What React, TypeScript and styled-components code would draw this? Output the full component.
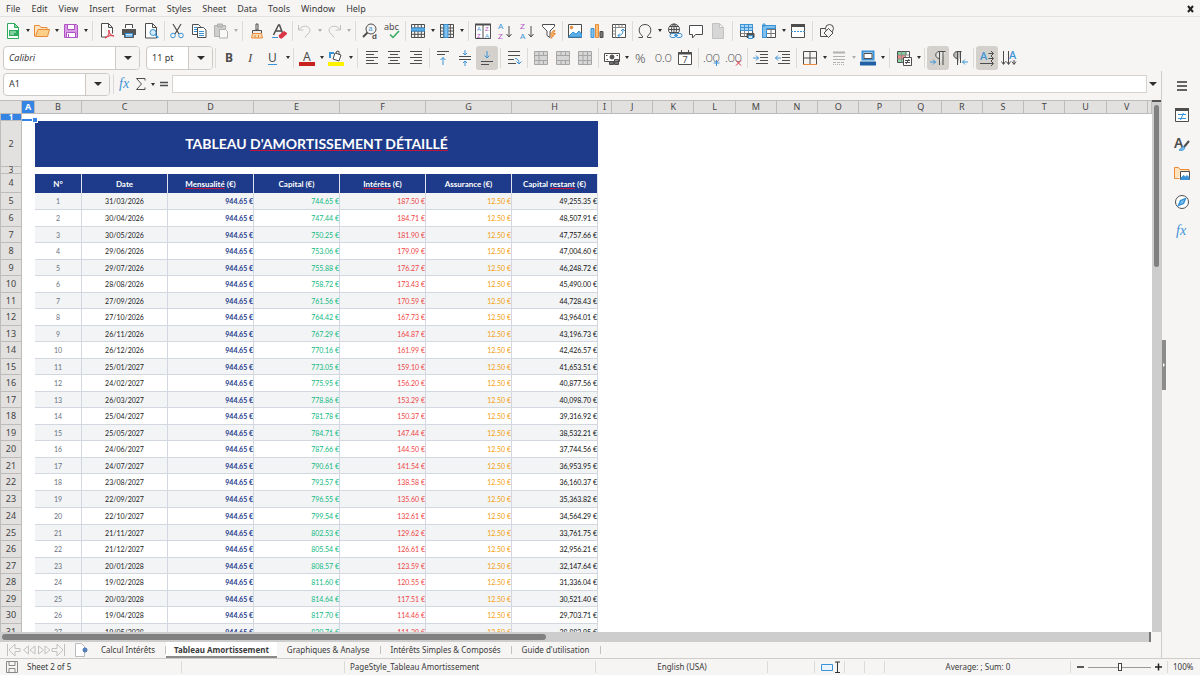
import React from "react";
import styled, { createGlobalStyle, css } from "styled-components";

const c = {
  chrome: "#f6f5f4",
  line: "#d5d3d0",
  text: "#3a3a3a",
  ink: "#4d4d4d",
  blue: "#3584e4",
  sky: "#3a93d6",
  navy: "#1e3a8a",
  header: "#e2e1e0",
  headerLine: "#bdbcbb",
  orange: "#e98b39",
  red: "#dc3545",
  purple: "#b152c4",
  green: "#2eab5c",
};

const Global = createGlobalStyle`
  * { box-sizing: border-box; }
  body { margin: 0; background: ${c.chrome}; color: ${c.text}; font-family: "Noto Sans", sans-serif; font-size: 9px; line-height: 12px; }
  button, input { font: inherit; color: inherit; margin: 0; padding: 0; border: 0; background: none; }
`;

const Shell = styled.div`
  display: flex;
  flex-direction: column;
  height: 100vh;
  min-height: 400px;
  overflow: hidden;
`;

/* ---------- menu ---------- */
const MenuBar = styled.nav`
  display: flex;
  align-items: center;
  height: 17px;
  flex: none;
  padding: 1px 5px 0 1px;
  border-bottom: 1px solid #e4e2e0;
`;
const MenuItem = styled.button`
  padding: 0 5px;
  margin-right: 1px;
  height: 15px;
`;
const CloseButton = styled.button`
  margin-left: auto;
  width: 10px;
  height: 15px;
  display: flex;
  align-items: center;
`;

/* ---------- toolbars ---------- */
const Toolbar = styled.div<{ $start?: number }>`
  display: flex;
  align-items: center;
  flex: none;
  height: 27px;
  padding-left: ${(p) => p.$start ?? 3}px;
`;
const Separator = styled.span<{ $w?: number }>`
  flex: none;
  width: ${(p) => p.$w ?? 5}px;
  height: 20px;
  background: linear-gradient(#dddbd8, #dddbd8) center / 1px 100% no-repeat;
`;
const ToolButton = styled.button<{ $active?: boolean; $dim?: boolean }>`
  flex: none;
  display: flex;
  align-items: center;
  justify-content: center;
  width: 22px;
  height: 24px;
  border-radius: 3px;
  ${(p) => p.$active && css`background: #d4d1cd;`}
  ${(p) => p.$dim && css`opacity: 0.4;`}
`;
const ArrowButton = styled.button<{ $dim?: boolean; $w?: number }>`
  flex: none;
  display: flex;
  align-items: center;
  justify-content: center;
  width: ${(p) => p.$w ?? 7}px;
  height: 24px;
  opacity: ${(p) => (p.$dim ? 0.35 : 1)};
`;
const Triangle = styled.span<{ $big?: boolean }>`
  border: ${(p) => (p.$big ? 4 : 2)}px solid transparent;
  border-top-color: #2e2e2e;
  border-bottom: 0;
  ${(p) => !p.$big && css`border-top-width: 3px;`}
`;
const Combo = styled.div<{ $w: number; $h?: number }>`
  display: flex;
  flex: none;
  width: ${(p) => p.$w}px;
  height: ${(p) => p.$h ?? 24}px;
  background: #fff;
  border: 1px solid #cdc9c5;
  border-radius: 4px;
  overflow: hidden;
  & + & { margin-left: 6px; }
`;
const ComboInput = styled.input<{ $italic?: boolean }>`
  flex: 1;
  min-width: 0;
  padding: 0 5px;
  font-style: ${(p) => (p.$italic ? "italic" : "normal")};
`;
const ComboButton = styled.button`
  width: 24px;
  display: flex;
  align-items: center;
  justify-content: center;
  background: ${c.chrome};
  border-left: 1px solid #cdc9c5;
`;

/* ---------- work area ---------- */
const Work = styled.div`
  display: flex;
  flex: 1;
  min-height: 0;
`;
const Main = styled.main`
  display: flex;
  flex-direction: column;
  flex: 1;
  min-width: 0;
`;
const FormulaBar = styled.div`
  display: flex;
  align-items: center;
  flex: none;
  height: 29px;
  padding: 1px 2px 4px 3px;
`;
const SmallTool = styled.button`
  flex: none;
  width: 16px;
  height: 20px;
  display: flex;
  align-items: center;
  justify-content: center;
`;
const FormulaInput = styled.input`
  flex: 1;
  min-width: 0;
  height: 18px;
  background: #fff;
  border: 1px solid #d5d3d0;
`;
const SheetRow = styled.div`
  display: flex;
  flex: 1;
  min-height: 0;
`;
const SheetView = styled.div`
  flex: 1;
  min-width: 0;
  overflow: hidden;
  background: #fff;
`;
const VTrack = styled.div`
  width: 9px;
  flex: none;
  background: #cdcdcd;
  border-top: 2px solid #555;
  padding: 3px 2px;
`;
const VThumb = styled.div`
  height: 31%;
  border-radius: 3px;
  background: #808080;
`;
const HTrack = styled.div`
  height: 10px;
  flex: none;
  margin-right: 10px;
  padding: 2px;
  background: #cdcdcd;
  border-right: 2px solid #777;
`;
const HThumb = styled.div`
  width: 47.5%;
  height: 6px;
  border-radius: 3px;
  background: #808080;
`;

/* ---------- grid ---------- */
const Grid = styled.table`
  width: 100%;
  table-layout: fixed;
  border-collapse: separate;
  border-spacing: 0;
  th, td { padding: 0; white-space: nowrap; }
`;
const Col = styled.col<{ $w?: number }>`
  width: ${(p) => (p.$w ? p.$w + "px" : "auto")};
`;
const HeadCell = styled.th<{ $on?: boolean }>`
  height: 14px;
  line-height: 12px;
  font-weight: ${(p) => (p.$on ? 700 : 400)};
  color: ${(p) => (p.$on ? "#fff" : "#444")};
  background: ${(p) => (p.$on ? c.blue : c.header)};
  border: solid ${c.headerLine};
  border-width: 1px 1px 1px 0;
`;
const RowHead = styled.th<{ $on?: boolean; $slim?: boolean }>`
  font-size: ${(p) => (p.$slim ? 8 : 9)}px;
  font-weight: ${(p) => (p.$on ? 700 : 400)};
  color: ${(p) => (p.$on ? "#fff" : "#444")};
  background: ${(p) => (p.$on ? c.blue : c.header)};
  border: solid ${c.headerLine};
  border-width: 0 1px 1px 1px;
`;
const FixedRow = styled.tr<{ $h: number }>`
  height: ${(p) => p.$h}px;
  line-height: ${(p) => Math.min(p.$h - 1, 12)}px;
`;
const Cursor = styled.td`
  position: relative;
  border-bottom: 2px solid ${c.blue};
  &::after {
    content: "";
    position: absolute;
    right: -2px;
    bottom: -3px;
    width: 4px;
    height: 4px;
    background: ${c.blue};
    outline: 1px solid #fff;
  }
`;
const Title = styled.th`
  background: ${c.navy};
  color: #fff;
  font: 700 14px/20px Lato, sans-serif;
`;
const Typo = styled.span`
  text-decoration: underline 1px #c0143c;
  text-decoration-skip-ink: none;
  text-underline-offset: 1px;
`;
const FieldHead = styled.th`
  background: ${c.navy};
  color: #fff;
  font: 700 8px/12px Lato, sans-serif;
  border-right: 1px solid #dfe3ee;
`;
/* Row height falls between two whole pixels, so rows alternate 16 and 17. */
const Body = styled.tbody`
  tr { height: 16px; line-height: 12px; }
  tr:nth-child(2n), tr:nth-child(9n + 1) { height: 17px; }
  tr:nth-child(odd) td { background: #f2f4f6; }
  tr td:nth-child(2), tr td:last-child { background: #fff; }
`;
const tones = {
  index: css`color: #6b7280; text-align: center;`,
  date: css`color: #222; text-align: center;`,
  pay: css`color: ${c.navy}; text-align: right; font-weight: 700;`,
  capital: css`color: #10b981; text-align: right;`,
  interest: css`color: #ef4444; text-align: right;`,
  insurance: css`color: #f59e0b; text-align: right;`,
  rest: css`color: #111; text-align: right;`,
};
const Cell = styled.td<{ $tone: keyof typeof tones }>`
  font-family: Lato, sans-serif;
  font-size: 7px;
  border: solid #d3d7df;
  border-width: 0 1px 1px 0;
  ${(p) => tones[p.$tone]}
`;

/* ---------- sheet tabs ---------- */
const Tabs = styled.div`
  display: flex;
  align-items: stretch;
  flex: none;
  height: 16px;
  font-size: 8px;
`;
const TabTools = styled.div`
  display: flex;
  align-items: center;
  width: 91px;
  padding-left: 6px;
`;
const NavButton = styled.button`
  width: 15px;
  height: 16px;
  opacity: 0.3;
`;
const AddButton = styled.button`
  margin-left: 8px;
  width: 16px;
  height: 16px;
`;
const Tab = styled.button<{ $on?: boolean }>`
  padding: 0 ${(p) => (p.$on ? 8 : 11)}px 1px ${(p) => (p.$on ? 8 : 10)}px;
  font-weight: ${(p) => (p.$on ? 700 : 400)};
  ${(p) =>
    p.$on
      ? css`background: #fff; border-bottom: 2px solid #8a8a8a; padding-top: 1px; padding-bottom: 0;`
      : css`background: linear-gradient(#c4c2c0, #c4c2c0) right center / 1px 8px no-repeat;`}
`;

/* ---------- side bar ---------- */
const Side = styled.aside`
  display: flex;
  flex: none;
  width: 39px;
  border-left: 1px solid #cfcdca;
`;
const Grip = styled.button`
  align-self: center;
  width: 4px;
  height: 50px;
  background: #8c8c8c;
  display: flex;
  align-items: center;
  justify-content: center;
  &::after {
    content: "";
    border: 2px solid transparent;
    border-left-color: #fff;
    border-right: 0;
  }
`;
const SideDeck = styled.div`
  flex: 1;
  display: flex;
  flex-direction: column;
  align-items: center;
  padding-right: 2px;
`;
const SideButton = styled.button`
  width: 29px;
  height: 29px;
  display: flex;
  align-items: center;
  justify-content: center;
`;

/* ---------- status bar ---------- */
const Status = styled.footer`
  display: grid;
  grid-template-columns: 22px 160fr 163fr 251fr 172fr 47px 30px 20px 20px 186fr 97px 32px;
  flex: none;
  height: 17px;
  border-top: 1px solid #cfcdca;
  font-size: 8px;
`;
const StatusCell = styled.div<{ $center?: boolean; $plain?: boolean }>`
  display: flex;
  align-items: center;
  justify-content: ${(p) => (p.$center ? "center" : "flex-start")};
  padding: 0 5px;
  white-space: nowrap;
  ${(p) => !p.$plain && css`background: linear-gradient(#dddbd8, #dddbd8) right center / 1px 12px no-repeat;`}
`;
const ZoomButton = styled.button`
  width: 9px;
  height: 16px;
  flex: none;
`;
const Slider = styled.input`
  appearance: none;
  flex: 1;
  min-width: 0;
  height: 12px;
  margin: 0 3px;
  background: linear-gradient(#999, #999) center / 100% 1px no-repeat;
  &::-webkit-slider-thumb {
    appearance: none;
    width: 4px;
    height: 8px;
    background: #fff;
    border: 1px solid #444;
  }
`;

/* ---------- icons ---------- */
const Glyph = styled.svg`
  display: block;
  flex: none;
  width: 16px;
  height: 16px;
  fill: none;
  stroke: ${c.ink};
  stroke-width: 1;
  overflow: visible;
  text { stroke: none; fill: ${c.ink}; font-family: "Noto Sans", sans-serif; }
  .small text, text.small { font-family: "Liberation Sans", sans-serif; }
`;
const Ic = ({ children }: { children: React.ReactNode }) => (
  <Glyph viewBox="0 0 16 16" aria-hidden="true">{children}</Glyph>
);
const page = "M2.5.5h7l4 4v11h-11zM9.5.5v4h4";
const B = c.sky;
const gridPath = "M1.5 1.5h13v13h-13zM1.5 5h13M1.5 8h13M1.5 11.3h13M4.7 1.5v13M8 1.5v13M11.3 1.5v13";
const merge = (mid: React.ReactNode) => (
  <g stroke="#a5a5a5">
    <path d="M1.5 1.5h13v13h-13z" fill="#d6d6d6" />
    <path d="M1.5 5.5h13M1.5 10.5h13M6 1.5v4M10.5 1.5v4M6 10.5v4M10.5 10.5v4" />
    {mid}
  </g>
);

const icons: Record<string, React.ReactNode> = {
  new: <><path d="M2.5.5h7l4 4v11h-11z" stroke={c.green} fill="#fff" /><path d="M9.5.5v4h4z" stroke={c.green} fill="#8fd6a4" /><path d="M4 7h9v6H4z" fill={c.green} stroke="none" /><path d="M5 9h6M5 11h4" stroke="#d9f2e1" /></>,
  open: <><path d="M.5 13.5v-11h5l1.500 2h6v3" stroke={c.orange} fill="#fbe3bd" /><path d="M1.500 13.500L4 6.500h11.500l-2 7z" stroke={c.orange} fill="#fdd08a" /></>,
  save: <><path d="M1.500 1.500h12l1 1v12h-13z" stroke={c.purple} fill="#d99be6" /><path d="M4.500 1.500h7v5h-7z" stroke={c.purple} fill="#fff" /><path d="M3.500 9.500h9v5h-9z" stroke={c.purple} fill="#fff" /><path d="M5.500 11v3" stroke={c.purple} /></>,
  pdf: <><path d="M2.500.5h7l4 4v6M2.500.5v13.500h5M9.500.5v4h4" fill="#fff" /><path d="M6 15c3-1 5-6 4-8-1 0 0 5 5 6-3-1-6 0-9 2z" stroke={c.red} fill="#f5b6bc" /></>,
  print: <><path d="M4.500 5V1.500h7V5" fill="#fff" /><path d="M1 6h14v6H1z" fill="#555" stroke="none" /><path d="M3.500 9.500h9v5h-9z" fill={B} stroke="#555" /><path d="M5 11.500h6M5 13h6" stroke="#cfe6f8" /></>,
  preview: <><path d="M2.500.5h7l4 4v10.500h-11zM9.500.5v4h4" fill="#fff" /><circle cx="10" cy="9.500" r="3" stroke={B} fill="#d5eafa" /><path d="M12.300 11.800l3 3" stroke={B} strokeWidth="1.500" /></>,
  cut: <><path d="M4 1l6 10M12 1L6 11" strokeWidth="1.200" /><circle cx="4" cy="12.500" r="2.300" stroke={B} /><circle cx="12" cy="12.500" r="2.300" stroke={B} /></>,
  copy: <><path d="M1.500 1.500h6l2 2v8h-8z" fill="#fff" /><path d="M3 4.500h3M3 6.500h3M3 8.500h3" stroke={B} /><path d="M6.500 4.500h6l2.500 2.500v7.500H6.500z" fill="#fff" /><path d="M8 8.500h5M8 10.500h5M8 12.500h5" stroke={B} /></>,
  paste: <><path d="M1.500 2.500h11v11h-11z" fill="#999" /><path d="M4.500 1h5v3h-5z" fill="#777" /><path d="M6.500 6.500h6l2 2v6.500h-8z" fill="#fff" /></>,
  brush: <><path d="M7 1h2v6H7zM3.500 7.500h9v3h-9z" fill="#eee" /><path d="M3.500 10.500h9l1 4.500H2.500z" stroke={c.orange} fill="#fbd9b0" /><path d="M6 12v3M9.500 12v3" stroke={c.orange} /></>,
  clear: <><path d="M2.500 12L7.500 2h1l3 8M4.500 8h6" strokeWidth="1.500" /><path d="M1 14.500h6" stroke={B} /><path d="M8 12.500l5-4 3 2-5 4.500h-2z" fill={c.red} stroke={c.red} /></>,
  undo: <path d="M1.500 2v5h5M2 6.500c3-5 11-4 11 1 0 3-4 4-5 7" stroke="#777" />,
  redo: <path d="M14.500 2v5h-5M14 6.500c-3-5-11-4-11 1 0 3 4 4 5 7" stroke="#777" />,
  find: <><circle cx="9" cy="6" r="5" /><path d="M5.500 9.500L1 14" strokeWidth="2" /><text className="small" x="6.500" y="7.500" fontSize="7" style={{ fill: B }}>a</text><text className="small" x="10" y="15.500" fontSize="8" fontWeight="700">d</text></>,
  spell: <><text x="0" y="7" fontSize="9">abc</text><path d="M6 11.500l3 3L15 8" stroke={c.green} strokeWidth="1.500" /></>,
  row: <><path d={gridPath} /><path d="M1.500 5h13v3h-13z" fill="#5aaee8" stroke={B} /></>,
  col: <><path d={gridPath} /><path d="M5 1.500h4v13H5z" fill="#7fc0ee" stroke={B} /></>,
  sort: <><path d="M.5 1.500h15v14H.5zM8 1.500v14" fill="#fff" /><path d="M0 1.500h16" strokeWidth="2" /><g className="small" fontSize="6"><text x="2" y="8" style={{ fill: B }}>A</text><text x="2" y="15" style={{ fill: c.purple }}>Z</text><text x="10" y="8" style={{ fill: c.purple }}>Z</text><text x="10" y="15" style={{ fill: B }}>A</text></g></>,
  az: <><g className="small" fontSize="8"><text x="1" y="6" style={{ fill: B }}>A</text><text x="1" y="16" style={{ fill: c.purple }}>Z</text></g><path d="M12 3v11M9.500 11l2.500 3 2.500-3" /></>,
  za: <><g className="small" fontSize="8"><text x="1" y="6" style={{ fill: c.purple }}>Z</text><text x="1" y="16" style={{ fill: B }}>A</text></g><path d="M12 3v11M9.500 11l2.500 3 2.500-3" /></>,
  filter: <><path d="M1.500 1.500h12v2L9 8v6.500l-3-2V8L1.500 3.500z" fill="#fff" /><path d="M12.500 7.500L9 12h2.500L10 15.500l4.500-5H12l2-3z" stroke={c.orange} fill="#fbbf75" /></>,
  image: <><path d="M1.500 1.500h13v13h-13z" fill="#fff" /><path d="M2 13l4-4 3 2 3-3 2.500 3v3H2z" fill="#5aaee8" stroke={B} /><circle cx="4.500" cy="4.500" r="1.300" fill={c.orange} stroke={c.orange} /></>,
  chart: <><path d="M2 5.500h3v9H2z" fill="#7fc0ee" stroke={B} /><path d="M6.500 1.500h3v13h-3z" fill="#fbbf75" stroke={c.orange} /><path d="M11 8.500h3v6h-3z" fill="#777" /></>,
  pivot: <><path d="M1.500 1.500h13v13h-13z" fill="#fff" /><path d="M1.500 4.500h13M4.500 1.500v13M8 1.500v3M11 1.500v3M1.500 8h3M1.500 11h3" stroke="#888" /><path d="M7 12.500c4 0 5-2 5-6M10 8l2-2 2 2M9 10.500l-2 2 2 2" stroke={B} /></>,
  omega: <path d="M1.500 14.500h4v-1.500C.5 10 1 1.500 8 1.500s7.500 8.500 2.500 11.500v1.500h4" />,
  globe: <><circle cx="8" cy="6.500" r="5.500" /><ellipse cx="8" cy="6.500" rx="2.500" ry="5.500" /><path d="M2.500 6.500h11M3.500 3.500h9M3.500 9.500h9M8 1v11" /><rect x="4" y="10.500" width="6" height="4" rx="2" stroke={B} fill={c.chrome} /><rect x="10" y="10.500" width="6" height="4" rx="2" stroke={B} fill={c.chrome} /><path d="M8 12.500h4" stroke={B} /></>,
  comment: <path d="M1.500 2.500h13v9h-7l-3 3.500v-3.500h-3z" fill="#fff" />,
  doc: <path d={page} fill="#aaa" stroke="#777" />,
  printrange: <><path d="M1.500 1.500h12v12h-12z" fill="#fff" /><path d="M1.500 1.500h12v6h-12z" fill="#a9d5f4" stroke={B} /><path d="M1.500 4.500h12M5.500 1.500v6M9.500 1.500v6" stroke={B} /><path d="M1.500 10.500h12M5.500 7.500v6M9.500 7.500v6" stroke="#888" /><path d="M8 10.500h7v4H8z" fill="#555" /><path d="M9.500 12.500h4v3h-4z" fill="#cfe6f8" stroke={B} /></>,
  freeze: <><path d="M1.500 2.500h13v12h-13z" fill="#fff" /><path d="M5.500 6v8.500M10 2.500v12M1.500 6.500h13M1.500 10.500h13" stroke="#777" /><path d="M1.500 2.500h13v3H5.500v9h-4z" fill="#7fc0ee" stroke={B} /><path d="M3 0v4M1 2h4" stroke={B} /></>,
  split: <><path d="M1.500 1.500h13v13h-13z" fill="#fff" /><path d="M1 2.500h14" strokeWidth="3" /><path d="M1 8.500h14" stroke={B} strokeDasharray="2 1" /></>,
  shapes: <><path d="M1.500 5.500h8v8h-8z" /><circle cx="10.500" cy="5.500" r="4" fill={c.chrome} /><path d="M9.500 5.500l4.500 4.500-4.500 4.500L5 10z" fill={c.chrome} /></>,
  bold: <text x="4" y="12" fontSize="12" fontWeight="700">B</text>,
  italic: <text x="5" y="12" fontSize="13" fontStyle="italic" style={{ fontFamily: "Liberation Serif, serif" }}>I</text>,
  under: <><text x="3" y="12" fontSize="12">U</text><path d="M3 14.500h9" stroke={B} /></>,
  fontcolor: <><text x="4" y="10.500" fontSize="12">A</text><path d="M0 14h16" stroke="#c9211e" strokeWidth="4" /></>,
  highlight: <><path d="M5 9l2-6 6 2-2 6zM8 3l1-2 2 .5v3" fill="#fff" /><path d="M2 8V3h4" stroke={B} strokeWidth="2" /><path d="M0 14h16" stroke="#fff200" strokeWidth="4" /></>,
  aleft: <path d="M2 1.500h12M2 4.500h8M2 7.500h12M2 10.500h8M2 13.500h12" />,
  acenter: <path d="M2 1.500h12M4 4.500h8M2 7.500h12M4 10.500h8M2 13.500h12" />,
  aright: <path d="M2 1.500h12M6 4.500h8M2 7.500h12M6 10.500h8M2 13.500h12" />,
  vtop: <><path d="M2 1.500h12M2 4.500h8" /><path d="M8 15V7.500M5.500 10L8 7.500l2.500 2.500" stroke={B} /></>,
  vmid: <><path d="M2 6.500h12M2 9.500h12" /><path d="M8 0v5M6 3l2 2 2-2M8 16v-5M6 13l2-2 2 2" stroke={B} /></>,
  vbottom: <><path d="M2 11.500h12M2 14.500h8" /><path d="M8 1v7M5.500 5.500L8 8l2.500-2.500" stroke={B} /></>,
  wrap: <><path d="M2 1.500h12M2 5.500h12M2 9.500h6M2 13.500h8" /><path d="M9 8.500c3 0 4 2 4 5M10.500 11.500l2.500 2.500L15.500 11.500" stroke={B} /></>,
  merge1: merge(<path d="M6 5.500v5" />),
  merge2: merge(null),
  merge3: merge(<path d="M6 5.500v5M10.500 5.500v5" />),
  money: <><path d="M.5 3.500h15v8H.5z" fill="#fff" /><circle cx="8" cy="7" r="2" fill="#555" /><path d="M2 5.500h1.500M12.500 5.500H14M2.500 9.500H4" /><path d="M5.500 11.500h4v3h-4zM10.500 9.500h4v5h-4z" fill="#999" /><path d="M5.500 13h4M10.500 11.500h4M10.500 13h4" /></>,
  percent: <text x="2" y="13" fontSize="13" fontWeight="300">%</text>,
  number: <text x="0" y="12" fontSize="12" fontWeight="300" style={{ fontFamily: "Lato, sans-serif" }}>0.0</text>,
  date: <><path d="M1.500 2.500h13v12h-13z" fill="#fff" /><path d="M1 3.500h14" strokeWidth="2" /><path d="M4.500 0v3M11.500 0v3" /><text x="5.500" y="13" fontSize="9">7</text></>,
  adddec: <><text x="-1" y="12" fontSize="12" fontWeight="300" style={{ fontFamily: "Lato, sans-serif" }}>.00</text><path d="M12.500 10v6M9.500 13h6" stroke={B} /></>,
  deldec: <><text x="-1" y="12" fontSize="12" fontWeight="300" style={{ fontFamily: "Lato, sans-serif" }}>.00</text><path d="M10 10.500l5 5M15 10.500l-5 5" stroke={c.red} /></>,
  indent: <><path d="M3 1.500h12M7 4.500h8M7 7.500h8M7 10.500h8M3 13.500h12" /><path d="M0 8h5.500M3 5.500L5.500 8 3 10.500" stroke={B} /></>,
  outdent: <><path d="M3 1.500h12M7 4.500h8M7 7.500h8M7 10.500h8M3 13.500h12" /><path d="M6 8H.5M3 5.500L.5 8 3 10.500" stroke={B} /></>,
  borders: <><path d="M1.500 14V1.500h13V14M8 1.500V14M1.500 8h13" /><path d="M1 14.500h14" stroke={c.orange} /></>,
  linestyle: <><path d="M2 2.500h12" strokeWidth="2" /><path d="M2 6.500h12M2 9.500h12" /><path d="M2 12.500h12" strokeDasharray="3 1" /><path d="M2 14.500h12" strokeDasharray="1 1" /></>,
  linecolor: <><path d="M2.500 1.500h11v8h-11z" fill="#fff" stroke={B} strokeWidth="2" /><path d="M4 3.500h8v5H4z" /><path d="M0 13.500h16" stroke="#1e5fa5" strokeWidth="4" /></>,
  cond: <><path d="M1.500 1.500h12v11h-12z" fill="#fff" /><path d="M2 2h9v3H2z" fill="#7fd09a" stroke="none" /><path d="M2 5h7v4H2z" fill="#f08f8a" stroke="none" /><path d="M2 9h5v3H2z" fill="#8fd6a4" stroke="none" /><path d="M1.500 5h12M1.500 9h12M5.500 1.500v11M9.500 1.500v11" stroke="#8a8a8a" /><path d="M7.500 7.500h8v8h-8z" fill="#fff" /><path d="M9 10.500h5M9 12.500h5M13 9l-3 5" /></>,
  ltr: <><path d="M9.500 15V1.500h6M13 15V1.500M9.500 8.500c-5 0-5-7 0-7" fill="#e7e5e2" /><path d="M0 12h5.500M3 9.500L5.500 12 3 14.500" stroke={B} /></>,
  rtl: <><path d="M5.500 15V1.500h4M8.500 13V1.500M5.500 8.500c-5 0-5-7 0-7z" fill="#bbb" /><path d="M16 12h-5.500M13 9.500L10.500 12l2.500 2.500" stroke={B} /></>,
  texth: <><text x="1" y="9.500" fontSize="11" fontWeight="500" style={{ fill: B }}>A</text><path d="M9.500 3.500H14M12 1l2.500 2.500L12 6M9.500 8.500H14M12 6l2.500 2.500L12 11M1 13.500h13M12 11l2.500 2.500L12 16" /></>,
  textv: <><path d="M2.500 1v13M.5 11.500l2 3 2-3M7.500 1v13M5.500 11.500l2 3 2-3M13 10v4M11 11.500l2 3 2-3" /><text x="8" y="9" fontSize="11" fontWeight="500" style={{ fill: B }}>A</text></>,
  fx: <text x="2" y="12" fontSize="14" fontStyle="italic" fontWeight="500" style={{ fill: B, fontFamily: "Liberation Serif, serif" }}>fx</text>,
  sum: <path d="M12 4.500V2.500H3.500l5 5.500-5 5.500H12v-2" />,
  equals: <path d="M4 6.500h8M4 9.500h8" strokeWidth="1.500" />,
  burger: <path d="M3 4h10M3 8h10M3 12h10" stroke="#333" strokeWidth="1.500" />,
  props: <><path d="M1.500 1.500h13v13h-13z" fill="#fff" /><path d="M1 2.500h14" strokeWidth="3" /><path d="M4 7.500h8M4 11.500h8M9.500 6l-3 7" stroke={B} /></>,
  stylesIcon: <><text x="0" y="12" fontSize="14" fontWeight="600">A</text><path d="M15 5l-5 6" strokeWidth="2" /><path d="M5 14c3 1 6 0 5.500-3-3-1-3 2-5.500 3z" stroke={B} fill="#7fc0ee" /></>,
  gallery: <><path d="M.5 13.500v-11h4l1.500 2h9v3M.5 13.500h5" stroke={c.orange} fill="#fde2bd" /><path d="M6.500 6.500h9v8h-9z" fill="#fff" /><path d="M7 13l2.500-2.500 2 1.500 1.500-1.500 2 2v2H7z" fill={B} stroke={B} /></>,
  compass: <><circle cx="8" cy="8" r="6.500" fill="#fff" /><path d="M11.500 4.500L9.500 9.500l-5 2 2-5z" fill="#7fc0ee" stroke={B} strokeWidth="1.500" /></>,
  first: <path d="M1.500 2v12M14 6.500H9V2L3 8l6 6V9.500h5z" />,
  prev: <path d="M7.500 4L2.500 8l5 4zM14 4L9 8l5 4z" />,
  next: <path d="M2.500 4l5 4-5 4zM9 4l5 4-5 4z" />,
  last: <path d="M13.500 2v12M1 6.500h5V2l6 6-6 6V9.500H1z" />,
  add: <><path d="M1.500 1.500h6l3 3v10h-9z" fill="#fff" stroke="#bbb" /><circle cx="11" cy="8" r="2" stroke="#2a5fa8" fill="#dbe9f8" /><path d="M9.500 8h3M11 6.500v3" stroke="#2a5fa8" /></>,
  disk: <g stroke="#888"><path d="M1.500 2.500h11v11h-11zM4 2.500h6v4H4zM4 9.500h6v4H4z" /></g>,
  close: <path d="M3 5l5 6M8 5l-5 6" stroke="#222" strokeWidth="2" />,
  selmode: <><path d="M1.500 5.500h11v6h-11z" stroke={B} fill="#eaf4fc" /><path d="M15 3h5M15 13.500h5M17.500 3v10.500" stroke="#333" /></>,
  minus: <path d="M1 8h7" stroke="#222" strokeWidth="1.500" />,
  plus: <path d="M1 8h7M4.500 4.500v7" stroke="#222" strokeWidth="1.500" />,
};

type Opts = { arrow?: boolean; active?: boolean; dim?: boolean };
type Item = ({ i: string; label: string } & Opts) | number;
const t = (i: string, label: string, o: Opts = {}): Item => ({ i, label, ...o });
const more = { arrow: true };

/* Numbers are separators, given by their width. */
const standard: Item[] = [
  t("new", "New", more), t("open", "Open", more), t("save", "Save", more), 7,
  t("pdf", "Export as PDF"), t("print", "Print"), t("preview", "Print Preview"), 4,
  t("cut", "Cut"), t("copy", "Copy"), t("paste", "Paste", { arrow: true, dim: true }), 7,
  t("brush", "Clone Formatting"), t("clear", "Clear Formatting"), 4,
  t("undo", "Undo", { arrow: true, dim: true }), t("redo", "Redo", { arrow: true, dim: true }), 7,
  t("find", "Find and Replace"), t("spell", "Spelling"), 4,
  t("row", "Row", more), t("col", "Column", more), 7,
  t("sort", "Sort"), t("az", "Sort Ascending"), t("za", "Sort Descending"), t("filter", "AutoFilter"), 4,
  t("image", "Insert Image"), t("chart", "Insert Chart"), t("pivot", "Pivot Table"), 4,
  t("omega", "Special Character", more), t("globe", "Hyperlink"), t("comment", "Comment"), t("doc", "Headers and Footers", { dim: true }), 7,
  t("printrange", "Print Area"), t("freeze", "Freeze", more), t("split", "Split Window"), 7,
  t("shapes", "Draw Functions"),
];
const formatting: Item[] = [
  5, t("bold", "Bold"), t("italic", "Italic"), t("under", "Underline", more), 5,
  t("fontcolor", "Font Color", more), t("highlight", "Background Color", more), 7,
  t("aleft", "Align Left"), t("acenter", "Center"), t("aright", "Align Right"), 5,
  t("vtop", "Align Top"), t("vmid", "Center Vertically"), t("vbottom", "Align Bottom", { active: true }), 5,
  t("wrap", "Wrap Text"), 5,
  t("merge1", "Merge and Center"), t("merge2", "Merge Cells"), t("merge3", "Split Cells"), 5,
  t("money", "Currency", more), t("percent", "Percent"), t("number", "Number"), t("date", "Date"), 5,
  t("adddec", "Add Decimal Place"), t("deldec", "Delete Decimal Place"), 5,
  t("indent", "Increase Indent"), t("outdent", "Decrease Indent"), 5,
  t("borders", "Borders", more), t("linestyle", "Border Style", { arrow: true, dim: true }), t("linecolor", "Border Color", more), 7,
  t("cond", "Conditional", more), 5,
  t("ltr", "Left-To-Right", { active: true }), t("rtl", "Right-To-Left"), 5,
  t("texth", "Text Horizontal", { active: true }), t("textv", "Text Vertical"),
];

const Tools = ({ items }: { items: Item[] }) => (
  <>
    {items.map((it, n) =>
      typeof it === "number" ? (
        <Separator key={n} $w={it} />
      ) : (
        <React.Fragment key={n}>
          <ToolButton aria-label={it.label} $active={it.active} $dim={it.dim}><Ic>{icons[it.i]}</Ic></ToolButton>
          {it.arrow && <ArrowButton aria-label={it.label + " options"} $dim={it.dim}><Triangle /></ArrowButton>}
        </React.Fragment>
      )
    )}
  </>
);

const menus = ["File", "Edit", "View", "Insert", "Format", "Styles", "Sheet", "Data", "Tools", "Window", "Help"];
const letters = "ABCDEFGHIJKLMNOPQRSTUV".split("");
const widths = [22, 13, 47, 86, 86, 86, 86, 86, 86, 14];

const schedule = `31/03/2026 744.65 187.50 49,255.35
30/04/2026 747.44 184.71 48,507.91
30/05/2026 750.25 181.90 47,757.66
29/06/2026 753.06 179.09 47,004.60
29/07/2026 755.88 176.27 46,248.72
28/08/2026 758.72 173.43 45,490.00
27/09/2026 761.56 170.59 44,728.43
27/10/2026 764.42 167.73 43,964.01
26/11/2026 767.29 164.87 43,196.73
26/12/2026 770.16 161.99 42,426.57
25/01/2027 773.05 159.10 41,653.51
24/02/2027 775.95 156.20 40,877.56
26/03/2027 778.86 153.29 40,098.70
25/04/2027 781.78 150.37 39,316.92
25/05/2027 784.71 147.44 38,532.21
24/06/2027 787.66 144.50 37,744.56
24/07/2027 790.61 141.54 36,953.95
23/08/2027 793.57 138.58 36,160.37
22/09/2027 796.55 135.60 35,363.82
22/10/2027 799.54 132.61 34,564.29
21/11/2027 802.53 129.62 33,761.75
21/12/2027 805.54 126.61 32,956.21
20/01/2028 808.57 123.59 32,147.64
19/02/2028 811.60 120.55 31,336.04
20/03/2028 814.64 117.51 30,521.40
19/04/2028 817.70 114.46 29,703.71
19/05/2028 820.76 111.39 28,882.95`.split("\n").map((l) => l.split(" "));

/* Columns to the right of I: J to V and the cut-off W. */
const rest = 14;

export default function App() {
  return (
    <Shell>
      <Global />
      <MenuBar aria-label="Menu">
        {menus.map((m) => <MenuItem key={m}>{m}</MenuItem>)}
        <CloseButton aria-label="Close"><Ic>{icons.close}</Ic></CloseButton>
      </MenuBar>
      <Toolbar $start={2} role="toolbar" aria-label="Standard"><Tools items={standard} /></Toolbar>
      <Toolbar role="toolbar" aria-label="Formatting">
        <Combo $w={137}>
          <ComboInput $italic aria-label="Font Name" defaultValue="Calibri" />
          <ComboButton aria-label="Font list"><Triangle $big /></ComboButton>
        </Combo>
        <Combo $w={67}>
          <ComboInput aria-label="Font Size" defaultValue="11 pt" />
          <ComboButton aria-label="Size list"><Triangle $big /></ComboButton>
        </Combo>
        <Tools items={formatting} />
      </Toolbar>
      <Work>
        <Main>
          <FormulaBar>
            <Combo $w={107} $h={23}>
              <ComboInput aria-label="Name Box" defaultValue="A1" />
              <ComboButton aria-label="Names"><Triangle $big /></ComboButton>
            </Combo>
            <Separator $w={7} />
            <SmallTool aria-label="Function Wizard"><Ic>{icons.fx}</Ic></SmallTool>
            <SmallTool aria-label="Select Function"><Ic>{icons.sum}</Ic></SmallTool>
            <ArrowButton aria-label="Select Function options"><Triangle /></ArrowButton>
            <SmallTool aria-label="Formula"><Ic>{icons.equals}</Ic></SmallTool>
            <FormulaInput aria-label="Input line" />
            <ArrowButton $w={12} aria-label="Expand Formula Bar"><Triangle $big /></ArrowButton>
          </FormulaBar>
          <SheetRow>
            <SheetView>
              <Grid>
                <colgroup>
                  {widths.map((w, i) => <Col key={i} $w={w} />)}
                  {letters.slice(9).map((l) => <Col key={l} />)}
                  <Col $w={4} />
                </colgroup>
                <thead>
                  <tr>
                    <HeadCell />
                    {letters.map((l) => <HeadCell key={l} scope="col" $on={l === "A"}>{l}</HeadCell>)}
                    <HeadCell />
                  </tr>
                  <FixedRow $h={7}><RowHead scope="row" $on $slim>1</RowHead><Cursor /><td colSpan={7 + 1 + rest} /></FixedRow>
                  <FixedRow $h={46}>
                    <RowHead scope="row">2</RowHead><td />
                    <Title colSpan={7}>TABLEAU <Typo>D'AMORTISSEMENT</Typo> <Typo>DÉTAILLÉ</Typo></Title>
                    <td colSpan={1 + rest} />
                  </FixedRow>
                  <FixedRow $h={7}><RowHead scope="row" $slim>3</RowHead><td colSpan={8 + 1 + rest} /></FixedRow>
                  <FixedRow $h={19}>
                    <RowHead scope="row">4</RowHead><td />
                    <FieldHead>N°</FieldHead>
                    <FieldHead>Date</FieldHead>
                    <FieldHead><Typo>Mensualité</Typo> (€)</FieldHead>
                    <FieldHead>Capital (€)</FieldHead>
                    <FieldHead><Typo>Intérêts</Typo> (€)</FieldHead>
                    <FieldHead>Assurance (€)</FieldHead>
                    <FieldHead>Capital <Typo>restant</Typo> (€)</FieldHead>
                    <td colSpan={1 + rest} />
                  </FixedRow>
                </thead>
                <Body>
                  {schedule.map(([date, capital, interest, left], i) => (
                    <tr key={date}>
                      <RowHead scope="row">{i + 5}</RowHead>
                      <td />
                      <Cell $tone="index">{i + 1}</Cell>
                      <Cell $tone="date">{date}</Cell>
                      <Cell $tone="pay">944.65 €</Cell>
                      <Cell $tone="capital">{capital} €</Cell>
                      <Cell $tone="interest">{interest} €</Cell>
                      <Cell $tone="insurance">12.50 €</Cell>
                      <Cell $tone="rest">{left} €</Cell>
                      <td colSpan={1 + rest} />
                    </tr>
                  ))}
                </Body>
              </Grid>
            </SheetView>
            <VTrack><VThumb /></VTrack>
          </SheetRow>
          <HTrack><HThumb /></HTrack>
          <Tabs>
            <TabTools>
              {["first", "prev", "next", "last"].map((n) => <NavButton key={n} aria-label={n + " sheet"}><Ic>{icons[n]}</Ic></NavButton>)}
              <AddButton aria-label="Add sheet"><Ic>{icons.add}</Ic></AddButton>
            </TabTools>
            <Tab>Calcul Intérêts</Tab>
            <Tab $on>Tableau Amortissement</Tab>
            <Tab>Graphiques &amp; Analyse</Tab>
            <Tab>Intérêts Simples &amp; Composés</Tab>
            <Tab>Guide d'utilisation</Tab>
          </Tabs>
        </Main>
        <Side>
          <Grip aria-label="Hide side bar" />
          <SideDeck>
            {[["burger", "Settings"], ["props", "Properties"], ["stylesIcon", "Styles"], ["gallery", "Gallery"], ["compass", "Navigator"], ["fx", "Functions"]].map(([i, l]) => (
              <SideButton key={i} aria-label={l}><Ic>{icons[i]}</Ic></SideButton>
            ))}
          </SideDeck>
        </Side>
      </Work>
      <Status>
        <StatusCell $plain><Ic>{icons.disk}</Ic></StatusCell>
        <StatusCell>Sheet 2 of 5</StatusCell>
        <StatusCell />
        <StatusCell>PageStyle_Tableau Amortissement</StatusCell>
        <StatusCell $center>English (USA)</StatusCell>
        <StatusCell />
        <StatusCell><Ic>{icons.selmode}</Ic></StatusCell>
        <StatusCell />
        <StatusCell />
        <StatusCell $center>Average: ; Sum: 0</StatusCell>
        <StatusCell>
          <ZoomButton aria-label="Zoom out"><Ic>{icons.minus}</Ic></ZoomButton>
          <Slider type="range" aria-label="Zoom" min={0} max={200} defaultValue={100} />
          <ZoomButton aria-label="Zoom in"><Ic>{icons.plus}</Ic></ZoomButton>
        </StatusCell>
        <StatusCell $plain>100%</StatusCell>
      </Status>
    </Shell>
  );
}
